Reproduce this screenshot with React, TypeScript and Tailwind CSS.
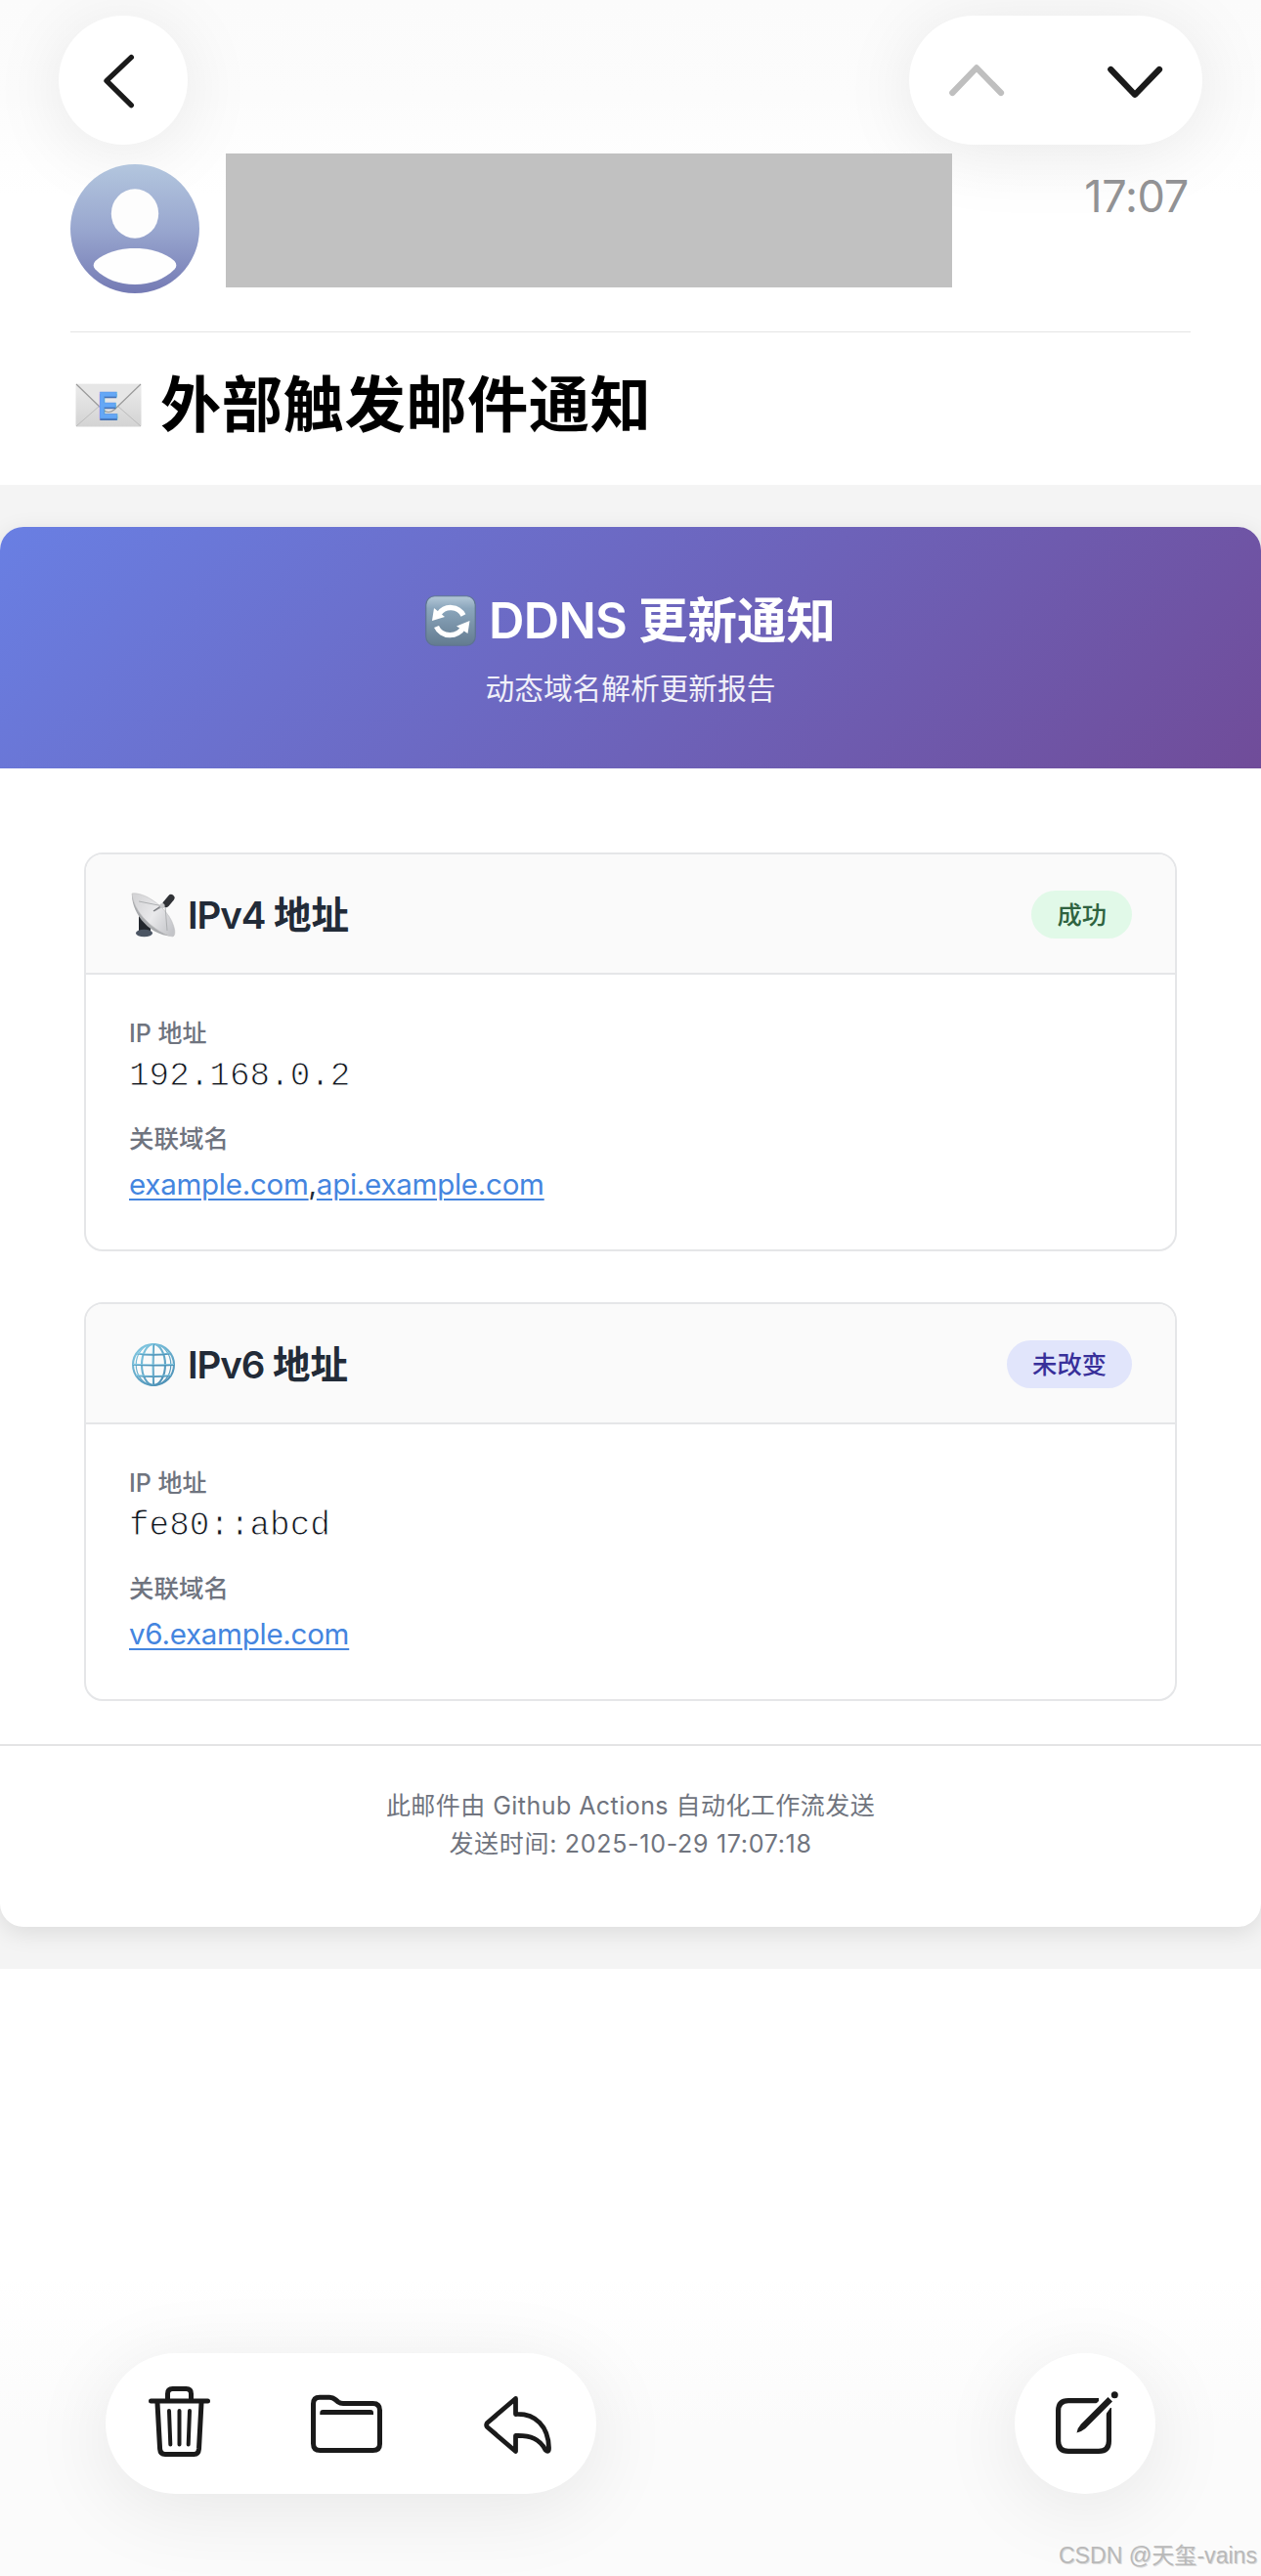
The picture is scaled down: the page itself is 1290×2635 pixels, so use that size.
import React from 'react';

interface DomainRecord {
  id: string;
  name: string;
  icon: React.FC;
  status: string;
  statusClass: string;
  address: string;
  domains: string[];
}

const EmailIcon: React.FC = () => (
  <svg className="w-[68px] h-[45px]" viewBox="0 0 68 45">
    <defs>
      <linearGradient id="env" x1="0" y1="0" x2="0" y2="1">
        <stop offset="0" stopColor="#ececec" />
        <stop offset="1" stopColor="#d3d3d3" />
      </linearGradient>
    </defs>
    <rect x="0.5" y="0.5" width="67" height="44" rx="1.5" fill="url(#env)" />
    <path d="M1 44 L25 23 M67 44 L43 23" stroke="#bcbcbc" strokeWidth="1" fill="none" />
    <path d="M1 1 L28 27 Q34 32 40 27 L67 1" stroke="#9a9a9a" strokeWidth="1.2" fill="#e6e6e6" />
    <text x="23" y="37.5" fontFamily="Liberation Sans, sans-serif" fontWeight="700" fontSize="38" textLength="21" lengthAdjust="spacingAndGlyphs" fill="#4673b4">E</text>
    <text x="23" y="35.5" fontFamily="Liberation Sans, sans-serif" fontWeight="700" fontSize="38" textLength="21" lengthAdjust="spacingAndGlyphs" fill="#64a7f6" stroke="#5797e6" strokeWidth="0.6">E</text>
  </svg>
);

const RefreshIcon: React.FC = () => (
  <svg className="w-[52px] h-[52px]" viewBox="0 0 52 52">
    <defs>
      <linearGradient id="ref" x1="0" y1="0" x2="0" y2="1">
        <stop offset="0" stopColor="#b4c8d8" />
        <stop offset="0.25" stopColor="#8ba6bc" />
        <stop offset="1" stopColor="#637b90" />
      </linearGradient>
    </defs>
    <rect x="0.75" y="0.75" width="50.5" height="50.5" rx="9" fill="url(#ref)" stroke="#5d7391" strokeWidth="1.2" />
    <g fill="none" stroke="#fff" strokeWidth="5.4">
      <path d="M14 19 A14.5 14.5 0 0 1 39 20.5" />
      <path d="M11.5 32 A15 14 0 0 0 39 32.5" />
    </g>
    <path d="M9 13 L7 26 L20 22 Z" fill="#fff" />
    <path d="M45.5 26 L43.5 39 L32 31.5 Z" fill="#fff" />
  </svg>
);

const DishIcon: React.FC = () => (
  <svg className="w-[46px] h-[46px]" viewBox="0 0 46 46">
    <defs>
      <linearGradient id="dish" x1="0" y1="0.2" x2="1" y2="0.8">
        <stop offset="0" stopColor="#d5d5d7" />
        <stop offset="0.5" stopColor="#e9e9eb" />
        <stop offset="1" stopColor="#c3c4c8" />
      </linearGradient>
    </defs>
    <path d="M8 24 L20 33 L20 41 L8 41 Z" fill="#23272d" />
    <ellipse cx="13.5" cy="41.5" rx="8.5" ry="3.8" fill="#4b5563" />
    <path d="M1 1 C0 16 14 43 43 45 C31 43 5 24 1 1 Z" fill="#a9abae" />
    <path d="M1 1 C13 -1 35 14 42 30 C45 37 46 43 43 45 C32 44 3 25 1 1 Z" fill="url(#dish)" stroke="#bdbdc0" strokeWidth="0.6" />
    <path d="M8 9 L33 14 L24 19 M35 14 L37 39" fill="none" stroke="#a8aaad" strokeWidth="0.9" />
    <path d="M36 11.5 L41 5.500" stroke="#303236" strokeWidth="7" strokeLinecap="round" />
    <path d="M23 19 L32 13" stroke="#77797d" strokeWidth="1.4" />
    <circle cx="32" cy="13.5" r="2.6" fill="#c7c8ca" />
  </svg>
);

const GlobeIcon: React.FC = () => (
  <svg className="w-[46px] h-[46px]" viewBox="0 0 46 46">
    <defs>
      <linearGradient id="globe" x1="0" y1="0" x2="0.6" y2="1">
        <stop offset="0" stopColor="#84cbe4" />
        <stop offset="1" stopColor="#4f93b8" />
      </linearGradient>
    </defs>
    <g fill="none" stroke="url(#globe)" strokeWidth="2.1">
      <circle cx="23" cy="23" r="21" />
      <ellipse cx="23" cy="23" rx="12" ry="21" />
      <ellipse cx="23" cy="23" rx="17.800" ry="21" strokeWidth="1.2" />
      <path d="M23 2 Q22 23 23 44" />
      <path d="M2 22.8 Q23 24 44 22.9" />
      <path d="M6 11.5 Q23 14 40 11.5" />
      <path d="M5 34 Q23 36 41 34" />
    </g>
  </svg>
);

const records: DomainRecord[] = [
  {
    id: 'ipv4',
    name: 'IPv4',
    icon: DishIcon,
    status: '成功',
    statusClass: 'bg-[#e1f9e8] text-[#2f6340]',
    address: '192.168.0.2',
    domains: ['example.com', 'api.example.com'],
  },
  {
    id: 'ipv6',
    name: 'IPv6',
    icon: GlobeIcon,
    status: '未改变',
    statusClass: 'bg-[#e1e5fb] text-[#38309a]',
    address: 'fe80::abcd',
    domains: ['v6.example.com'],
  },
];

const TopBar: React.FC = () => (
  <div className="flex justify-between h-[148px] pt-4 px-[60px]">
    <button className="w-[132px] h-[132px] rounded-full bg-white shadow-[0_8px_76px_rgba(0,0,0,0.085)]">
      <svg className="w-[132px] h-[132px]" viewBox="0 0 132 132" fill="none" stroke="#1a1a1a" strokeWidth="5.4" strokeLinecap="round" strokeLinejoin="round">
        <path d="M74.3 42.6 L49 66.6 L74.3 91.6" />
      </svg>
    </button>
    <div className="w-[300px] h-[132px] rounded-full bg-white shadow-[0_8px_76px_rgba(0,0,0,0.085)]">
      <svg className="w-[300px] h-[132px]" viewBox="0 0 300 132" fill="none" strokeWidth="6.2" strokeLinecap="round" strokeLinejoin="round">
        <path d="M44.3 79 L69 53.4 L94 79" stroke="#bfbfbf" />
        <path d="M206.3 55 L231 80.8 L256 55" stroke="#1a1a1a" />
      </svg>
    </div>
  </div>
);

const Sender: React.FC = () => (
  <div className="relative flex items-start h-[192px] mx-[72px] border-b border-[#e4e4e4]">
    <svg className="w-[132px] h-[132px] mt-5" viewBox="0 0 132 132">
      <defs>
        <linearGradient id="avatar" x1="0" y1="0" x2="0" y2="1">
          <stop offset="0" stopColor="#b3c6de" />
          <stop offset="0.5" stopColor="#99a7cf" />
          <stop offset="1" stopColor="#747ab4" />
        </linearGradient>
      </defs>
      <circle cx="66" cy="66" r="66" fill="url(#avatar)" />
      <ellipse cx="66" cy="50.5" rx="24.2" ry="25.2" fill="#fdfdfd" />
      <path d="M25.5 99 C36 90 50 86 66 86 C82 86 96 90 106.5 99 C109 102 109 105 106.5 107.5 C96 118 82 123 66 123 C50 123 36 118 25.5 107.5 C23 105 23 102 25.5 99 Z" fill="#fefefe" />
    </svg>
    <div className="w-[743px] h-[137px] mt-[9px] ml-[27px] bg-[#c1c1c1]" />
    <div className="ml-auto mt-[29px] mr-[2px] text-[45px] leading-[48px] tracking-[-0.3px] text-[#929294]">17:07</div>
  </div>
);

const RecordCard: React.FC<{ record: DomainRecord }> = ({ record }) => {
  const Icon = record.icon;

  return (
    <div className="h-[408px] rounded-[19px] border-2 border-[#e5e6e8] overflow-hidden bg-white">
      <div className="flex items-center justify-between h-[123px] pt-[2px] px-11 border-b-2 border-[#e5e6e8] bg-[#fafafa]">
        <div className="flex items-center">
          <div className="ml-[2px] mr-[12px]">
            <Icon />
          </div>
          <h2 className="text-[38.5px] leading-[46px] font-semibold text-[#222b38]">
            <span className="tracking-[-1.1px]">{record.name} </span>
            地址
          </h2>
        </div>
        <span className={`rounded-full px-[26px] text-[25.3px] leading-[49px] font-medium ${record.statusClass}`}>
          {record.status}
        </span>
      </div>
      <div className="px-11 pt-[42px]">
        <div className="text-[25px] leading-[36px] font-medium text-[#6f747f]">IP 地址</div>
        <div className="mt-[6px] text-[34.3px] leading-[40px] text-[#10151d] font-[family-name:'Liberation_Mono',monospace] [-webkit-text-stroke:0.9px_#fff]">{record.address}</div>
        <div className="mt-[26px] text-[25.5px] leading-[36px] font-medium text-[#6f747f]">关联域名</div>
        <div className="mt-2 text-[29.5px] leading-[40px] tracking-[-0.25px] text-[#222b38]">
          {record.domains.map((domain, index) => (
            <React.Fragment key={domain}>
              {index > 0 && ','}
              <a className="text-[#4485df] underline decoration-2 underline-offset-[4px]">{domain}</a>
            </React.Fragment>
          ))}
        </div>
      </div>
    </div>
  );
};

const BottomBar: React.FC = () => (
  <div className="flex justify-between w-[1074px] ml-[108px] mt-[393px]">
    <div className="w-[502px] h-[144px] rounded-full bg-white shadow-[0_14px_84px_rgba(0,0,0,0.085)]">
      <svg className="w-[502px] h-[144px]" viewBox="108 2407 502 144" fill="none" stroke="#1a1a1a" strokeWidth="5" strokeLinecap="round" strokeLinejoin="round">
        {/* trash */}
        <path d="M154.5 2456 H212.5" />
        <path d="M171.5 2455 V2448.5 Q171.5 2443.5 176.5 2443.5 H190.5 Q195.5 2443.5 195.5 2448.5 V2455" />
        <path d="M161 2458 L163.6 2505 Q164 2510.5 169 2510.5 H198.5 Q203 2510.5 203.5 2505 L206 2458" />
        <path d="M173 2466 L174.3 2500.5 M183.5 2466 V2500.5 M194 2466 L192.7 2500.5" strokeWidth="4" />
        {/* folder */}
        <path d="M320.5 2459 Q320.5 2452.3 327 2452.3 H337 Q340.5 2452.3 343 2454.5 L346 2457 Q348 2458.5 351 2458.5 H381.5 Q388.5 2458.5 388.5 2465.5 V2500 Q388.5 2506.5 381.5 2506.5 H327.5 Q320.5 2506.5 320.5 2499.5 Z" />
        <path d="M327.3 2470 V2468 Q327.3 2465 330.3 2465 H379 Q382 2465 382 2468 V2470 Z" fill="#1a1a1a" stroke="none" />
        {/* reply */}
        <path d="M527.5 2453.5 L498.3 2478.5 Q497 2480.5 498.3 2482.5 L527.5 2507.5 V2491.5 C543 2491 552 2495 558 2506 Q561.5 2509.5 561.5 2504 C561 2482 548 2468.5 527.5 2469.5 Z" strokeWidth="4.8" />
      </svg>
    </div>
    <div className="w-[144px] h-[144px] rounded-full bg-white shadow-[0_14px_84px_rgba(0,0,0,0.085)]">
      <svg className="w-[144px] h-[144px]" viewBox="1038 2407 144 144" fill="none" stroke="#1a1a1a" strokeWidth="5.2">
        <path d="M1124 2455.6 H1093 Q1082.6 2455.6 1082.6 2466 V2497 Q1082.6 2507.4 1093 2507.4 H1124 Q1134.4 2507.4 1134.4 2497 V2463" />
        <path d="M1120.5 2459.5 L1128 2452 L1138 2460 L1131 2470 Z" fill="#fff" stroke="none" />
        <path d="M1133.500 2452 L1138 2456.5 L1110.5 2484 Q1107 2487 1101.5 2488.5 Q1102.5 2483 1106 2479.5 Z" fill="#1a1a1a" stroke="none" />
        <circle cx="1140.3" cy="2449.8" r="3.5" fill="#1a1a1a" stroke="none" />
      </svg>
    </div>
  </div>
);

export default function App() {
  return (
    <div className="relative flex flex-col w-[1290px] h-[2635px] overflow-hidden bg-[linear-gradient(to_bottom,#fbfbfb_0px,#fcfcfc_100px,#ffffff_200px,#ffffff_2330px,#fbfbfb_2480px,#fbfbfb_2635px)] font-[family-name:Inter,'Noto_Sans_CJK_SC',sans-serif]">
      <TopBar />
      <Sender />

      <div className="flex items-center h-[148px] mb-2 pl-[77px]">
        <EmailIcon />
        <h1 className="ml-[19px] pt-[2px] text-[62.3px] leading-[72px] tracking-[0.5px] font-bold text-black">外部触发邮件通知</h1>
      </div>

      <div className="h-[1518px] py-[43px] bg-[#f4f4f4]">
        <div className="h-[1432px] rounded-[24px] overflow-hidden bg-white shadow-[0_6px_24px_rgba(0,0,0,0.1)]">
          <div className="h-[247px] pt-[66px] text-center text-white bg-[linear-gradient(135deg,#697fe3_0%,#704c99_100%)]">
            <div className="flex items-center justify-center">
              <RefreshIcon />
              <h1 className="ml-[13px] text-[50.5px] leading-[60px] font-semibold">
                <span className="tracking-[-0.8px]">DDNS </span>
                更新通知
              </h1>
            </div>
            <p className="mt-[19px] text-[29.7px] leading-[40px] text-white/90">动态域名解析更新报告</p>
          </div>

          <div className="flex flex-col gap-[52px] px-[86px] pt-[86px] pb-11">
            {records.map(record => (
              <RecordCard key={record.id} record={record} />
            ))}
          </div>

          <div className="pt-[42px] border-t-2 border-[#e4e4e5] text-center text-[25px] leading-[39px] text-[#70747e]">
            <p className="tracking-[0.45px]">此邮件由 Github Actions 自动化工作流发送</p>
            <p className="tracking-[0.7px]">发送时间: 2025-10-29 17:07:18</p>
          </div>
        </div>
      </div>

      <BottomBar />

      {/* watermark */}
      <div className="absolute right-[4px] bottom-[5px] text-[23.1px] leading-[32px] text-[#b9b9b9] [text-shadow:1px_1px_0_#dcdcdc] font-[family-name:'Liberation_Sans','Noto_Sans_CJK_SC',sans-serif]">CSDN @天玺-vains</div>
    </div>
  );
}
